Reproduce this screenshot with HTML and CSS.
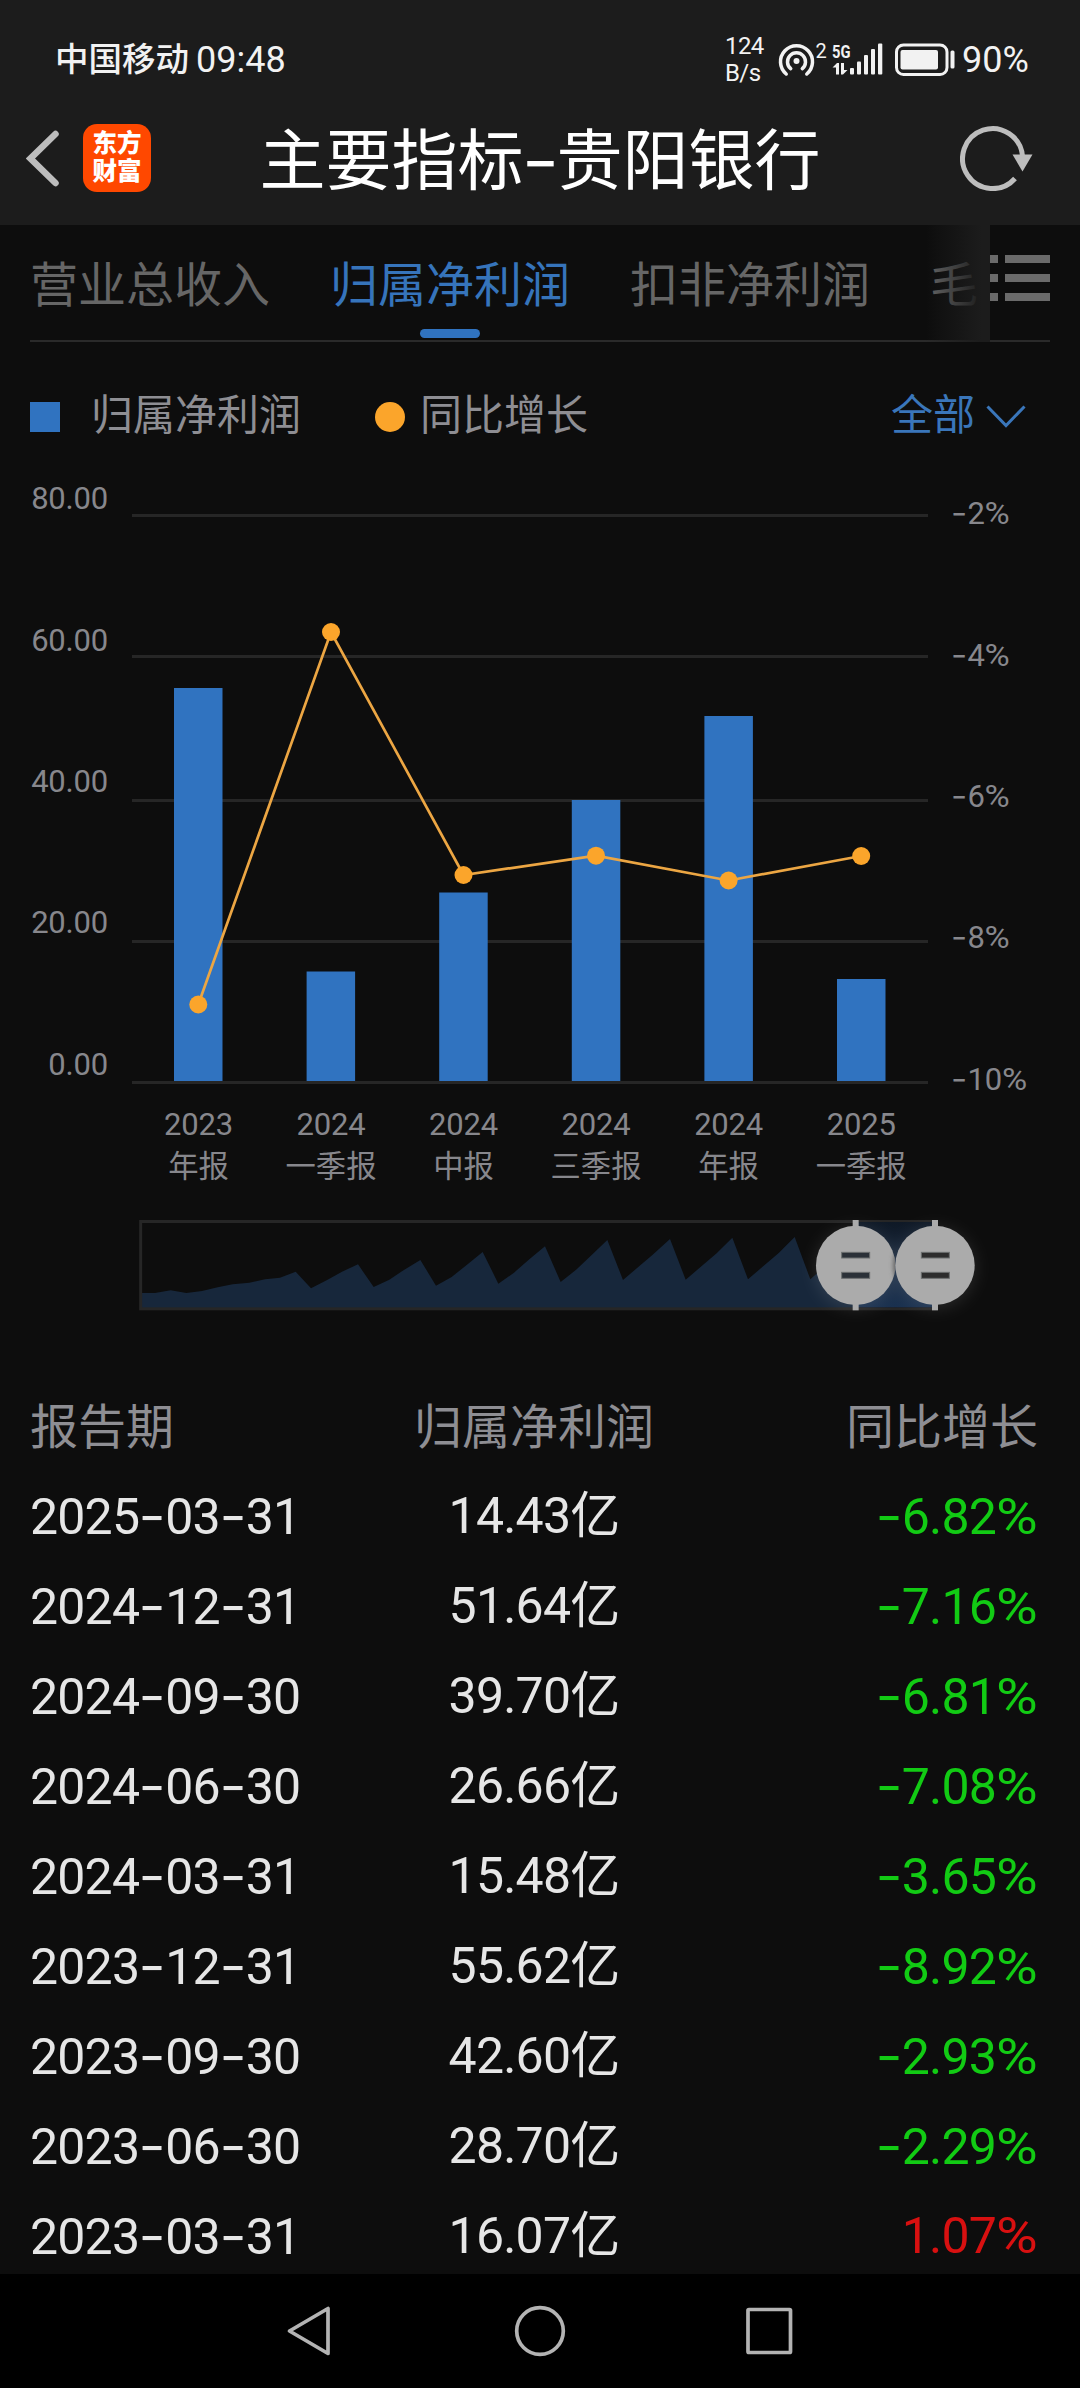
FILE: index.html
```html
<!DOCTYPE html>
<html lang="zh-CN">
<head>
<meta charset="utf-8">
<title>主要指标-贵阳银行</title>
<link rel="stylesheet" href="styles.css">
</head>
<body>
<header class="top">
  <div class="status">
    <div class="carrier"><span class="carrier-name">中国移动</span><span class="clock">09:48</span></div>
    <div class="status-right">
      <div class="speed"><span>124</span><span>B/s</span></div>
      <svg class="signal" width="78" height="40" viewBox="777 40 78 40">
        <g fill="none" stroke="#f2f2f2" stroke-width="3.5" stroke-linecap="round">
          <path d="M786.2 74A16 16 0 1 1 806.8 74"/>
          <path d="M790.7 68.7A9 9 0 1 1 802.3 68.7"/>
        </g>
        <circle cx="796.5" cy="61" r="3" fill="#f2f2f2"/>
        <text x="815.5" y="58" font-size="20" fill="#f2f2f2">2</text>
        <text x="832" y="57.5" font-size="19" font-weight="700" fill="#f2f2f2" textLength="18.5" lengthAdjust="spacingAndGlyphs">5G</text>
        <path d="M832.5 67.5L837 63h2v11.500h-3v-7zM841 63h3v7h3.500L843 74.500h-2z" fill="#f2f2f2"/>
      </svg>
      <svg class="bars" width="33" height="40" viewBox="850 40 33 40" fill="#f2f2f2">
        <rect x="850" y="68" width="4" height="6.500" rx="1"/><rect x="857" y="61.500" width="4" height="13" rx="1"/><rect x="864" y="55" width="4" height="19.500" rx="1"/><rect x="871" y="49" width="4" height="25.500" rx="1"/><rect x="878" y="43.500" width="4.300" height="31" rx="1"/>
      </svg>
      <svg class="battery" width="61" height="40" viewBox="894 40 61 40">
        <rect x="896.500" y="45" width="50.500" height="29.500" rx="7" fill="none" stroke="#f2f2f2" stroke-width="3"/>
        <rect x="900.500" y="50" width="37.500" height="19.500" rx="2" fill="#f2f2f2"/>
        <rect x="950.500" y="50.500" width="4" height="18" rx="1.500" fill="#f2f2f2"/>
      </svg>
      <span class="level">90%</span>
    </div>
  </div>
  <div class="titlebar">
    <div class="left">
      <svg width="34" height="58" viewBox="26 128 34 58"><path d="M55.500 133L30.500 157.500L55.500 182" fill="none" stroke="#bdbdbd" stroke-width="6.500" stroke-linecap="round" stroke-linejoin="miter"/></svg>
      <div class="logo"><span>东方</span><span>财富</span></div>
    </div>
    <h1>主要指标<i>-</i>贵阳银行</h1>
    <svg class="refresh" width="74" height="66" viewBox="960 124.500 74 66"><path d="M1015 178A30 30 0 1 1 1022.500 156" fill="none" stroke="#bdbdbd" stroke-width="5"/><path d="M1012.500 154h20l-10 17z" fill="#bdbdbd"/></svg>
  </div>
</header>

<nav class="tabs">
  <div class="tab-list">
    <span>营业总收入</span><span class="active">归属净利润</span><span>扣非净利润</span><span class="partial">毛</span>
  </div>
  <svg class="menu" width="60" height="46" viewBox="0 0 60 46" fill="#6a6a6a"><path d="M0 0h8v8H0zM15 0h45v8H15zM0 19h8v8H0zM15 19h45v8H15zM0 38h8v8H0zM15 38h45v8H15z"/></svg>
</nav>

<section class="legend">
  <i class="square"></i><span class="l1">归属净利润</span>
  <i class="dot"></i><span>同比增长</span>
  <div class="range"><span>全部</span><svg width="40" height="24" viewBox="0 0 40 24"><path d="M1.500 1.500L20 20.500L38.500 1.500" fill="none" stroke="#3a76ba" stroke-width="3"/></svg></div>
</section>

<svg class="chart" width="1080" height="710" viewBox="0 480 1080 710">
  <g fill="#262626">
    <rect x="132" y="514" width="796" height="3"/><rect x="132" y="655" width="796" height="3"/><rect x="132" y="799" width="796" height="3"/><rect x="132" y="940" width="796" height="3"/><rect x="132" y="1081" width="796" height="3"/>
  </g>
  <g fill="#3073c0">
    <rect x="174" y="688" width="48.500" height="393"/><rect x="306.600" y="971.500" width="48.500" height="109.500"/><rect x="439.200" y="892.500" width="48.500" height="188.500"/><rect x="571.800" y="800" width="48.500" height="281"/><rect x="704.400" y="716" width="48.500" height="365"/><rect x="837" y="979" width="48.500" height="102"/>
  </g>
  <polyline points="198.300,1004.500 331,632 463.500,875 596,855.700 728.600,880.500 861.200,856" fill="none" stroke="#eca643" stroke-width="2.700"/>
  <g fill="#fba52b">
    <circle cx="198.300" cy="1004.500" r="9"/><circle cx="331" cy="632" r="9"/><circle cx="463.500" cy="875" r="9"/><circle cx="596" cy="855.700" r="9"/><circle cx="728.600" cy="880.500" r="9"/><circle cx="861.200" cy="856" r="9"/>
  </g>
  <g class="axis" text-anchor="end">
    <text x="108" y="509">80.00</text><text x="108" y="650.500">60.00</text><text x="108" y="792">40.00</text><text x="108" y="933">20.00</text><text x="108" y="1075">0.00</text>
  </g>
  <g class="axis">
    <text class="minus" x="951" y="524" textLength="16" lengthAdjust="spacingAndGlyphs">-</text><text x="967.500" y="524">2</text><text x="984.500" y="524" textLength="25" lengthAdjust="spacingAndGlyphs">%</text>
    <text class="minus" x="951" y="665.500" textLength="16" lengthAdjust="spacingAndGlyphs">-</text><text x="967.500" y="665.500">4</text><text x="984.500" y="665.500" textLength="25" lengthAdjust="spacingAndGlyphs">%</text>
    <text class="minus" x="951" y="807" textLength="16" lengthAdjust="spacingAndGlyphs">-</text><text x="967.500" y="807">6</text><text x="984.500" y="807" textLength="25" lengthAdjust="spacingAndGlyphs">%</text>
    <text class="minus" x="951" y="948" textLength="16" lengthAdjust="spacingAndGlyphs">-</text><text x="967.500" y="948">8</text><text x="984.500" y="948" textLength="25" lengthAdjust="spacingAndGlyphs">%</text>
    <text class="minus" x="951" y="1089.500" textLength="16" lengthAdjust="spacingAndGlyphs">-</text><text x="967.500" y="1089.500">10</text><text x="1002" y="1089.500" textLength="25" lengthAdjust="spacingAndGlyphs">%</text>
  </g>
  <g class="axis" text-anchor="middle">
    <text x="198.500" y="1134.500">2023</text><text x="331" y="1134.500">2024</text><text x="463.500" y="1134.500">2024</text><text x="596" y="1134.500">2024</text><text x="728.600" y="1134.500">2024</text><text x="861.200" y="1134.500">2025</text>
  </g>
  <g class="period" text-anchor="middle">
    <text x="198.500" y="1176.500">年报</text><text x="331" y="1176.500">一季报</text><text x="463.500" y="1176.500">中报</text><text x="596" y="1176.500">三季报</text><text x="728.600" y="1176.500">年报</text><text x="861.200" y="1176.500">一季报</text>
  </g>
</svg>

<svg class="slider" width="960" height="140" viewBox="0 0 2880 420">
  <defs>
    <linearGradient id="sel" x1="0" y1="0" x2="0" y2="1"><stop offset="0" stop-color="#0f1926"/><stop offset="1" stop-color="#19304f"/></linearGradient>
    <filter id="glow" x="-50%" y="-50%" width="200%" height="200%"><feGaussianBlur stdDeviation="26"/></filter>
    <filter id="soft" x="-50%" y="-50%" width="200%" height="200%"><feGaussianBlur stdDeviation="8"/></filter>
    <clipPath id="knob"><circle cx="2207" cy="226" r="119"/></clipPath>
  </defs>
  <path fill="#17273b" d="M64 309H105L152 301L199 309L246 303L293 292L338 283L388 278L435 268L480 263L527 245L573 295L620 271L666 245L714 223L761 291L808 269L853 239L901 210L948 287L995 261L1041 224L1088 186L1135 281L1182 248L1228 208L1275 169L1322 276L1370 238L1415 195L1462 150L1509 270L1598 194L1650 147L1697 269L1790 190L1837 143L1884 268L1977 188L2024 141L2071 268L2160 188L2207 145V357H64Z"/>
  <rect x="62" y="94.500" width="2383" height="262" fill="none" stroke="#262626" stroke-width="9"/>
  <rect x="2207" y="96" width="238" height="256" fill="url(#sel)"/>
  <g fill="#fff" opacity=".12" filter="url(#glow)"><circle cx="2207" cy="234" r="119"/><circle cx="2445" cy="234" r="119"/></g>
  <g fill="#ababab">
    <rect x="2198" y="90" width="18" height="271"/><rect x="2436" y="90" width="18" height="271"/>
    <circle cx="2207" cy="226" r="119"/>
    <g clip-path="url(#knob)"><circle cx="2445" cy="226" r="124" fill="#555" filter="url(#soft)"/></g>
    <circle cx="2445" cy="226" r="119"/>
  </g>
  <g fill="#2b3138" stroke="#6c7070" stroke-width="3">
    <rect x="2165" y="187" width="84" height="17"/><rect x="2165" y="247" width="84" height="18"/>
    <rect x="2404" y="187" width="84" height="17" fill="#2d2d2d"/><rect x="2404" y="247" width="84" height="18" fill="#2d2d2d"/>
  </g>
</svg>

<section class="table">
  <div class="row head"><span>报告期</span><span>归属净利润</span><span>同比增长</span></div>
  <div class="row"><span>2025<i>-</i>03<i>-</i>31</span><span>14.43亿</span><span class="down"><i>-</i>6.82<b>%</b></span></div>
  <div class="row"><span>2024<i>-</i>12<i>-</i>31</span><span>51.64亿</span><span class="down"><i>-</i>7.16<b>%</b></span></div>
  <div class="row"><span>2024<i>-</i>09<i>-</i>30</span><span>39.70亿</span><span class="down"><i>-</i>6.81<b>%</b></span></div>
  <div class="row"><span>2024<i>-</i>06<i>-</i>30</span><span>26.66亿</span><span class="down"><i>-</i>7.08<b>%</b></span></div>
  <div class="row"><span>2024<i>-</i>03<i>-</i>31</span><span>15.48亿</span><span class="down"><i>-</i>3.65<b>%</b></span></div>
  <div class="row"><span>2023<i>-</i>12<i>-</i>31</span><span>55.62亿</span><span class="down"><i>-</i>8.92<b>%</b></span></div>
  <div class="row"><span>2023<i>-</i>09<i>-</i>30</span><span>42.60亿</span><span class="down"><i>-</i>2.93<b>%</b></span></div>
  <div class="row"><span>2023<i>-</i>06<i>-</i>30</span><span>28.70亿</span><span class="down"><i>-</i>2.29<b>%</b></span></div>
  <div class="row last"><span>2023<i>-</i>03<i>-</i>31</span><span>16.07亿</span><span class="up">1.07<b>%</b></span></div>
</section>

<footer class="sysnav">
  <svg width="1080" height="114" viewBox="0 2274 1080 114" fill="none" stroke="#b3b3b3" stroke-width="3.700" stroke-linejoin="round">
    <path d="M328 2308.500V2353.500L289.500 2331Z"/>
    <circle cx="540" cy="2331" r="23.300"/>
    <rect x="748" y="2309.500" width="42.500" height="43" rx="1"/>
  </svg>
</footer>
</body>
</html>
```
FILE: styles.css
```css
* { box-sizing: border-box; }
body {
  margin: 0;
  width: 1080px;
  height: 2388px;
  display: flex;
  flex-direction: column;
  overflow: hidden;
  background: #0d0d0d;
  color: #e6e6e6;
  font-family: Roboto, "Noto Sans CJK SC", sans-serif;
}
i { font-style: normal; }
svg { display: block; flex: none; }

.top { height: 225px; flex: none; background: #1c1c1c; }
.status {
  height: 90px;
  padding: 30px 48px 0 55px;
  display: flex;
  justify-content: space-between;
  align-items: center;
  color: #f2f2f2;
}
.carrier { display: flex; align-items: center; gap: 7px; line-height: 60px; }
.carrier-name { font-size: 33.5px; font-weight: 500; }
.clock { font-size: 36px; }
.status-right { display: flex; align-items: center; }
.speed { width: 52px; display: flex; flex-direction: column; font-size: 24px; line-height: 27px; letter-spacing: -.6px; }
.signal { margin-right: -5px; }
.bars { margin-right: 11px; }
.battery { margin-right: 7px; }
.level { font-size: 36px; width: 70px; line-height: 60px; }

.titlebar {
  height: 135px;
  padding: 0 46px 0 26px;
  display: grid;
  grid-template-columns: 200px 1fr 180px;
  align-items: center;
}
.left { display: flex; align-items: center; gap: 23px; }
.logo {
  width: 68px;
  height: 68px;
  padding-top: 6px;
  border-radius: 14px;
  background: #ff4800;
  color: #fff;
  display: flex;
  flex-direction: column;
  align-items: center;
  font-size: 24.5px;
  font-weight: 900;
  line-height: 28.500px;
}
h1 {
  margin: 0;
  padding-top: 6px;
  text-align: center;
  white-space: nowrap;
  font-size: 66px;
  font-weight: 400;
  line-height: 80px;
  color: #fff;
}
h1 i { display: inline-block; width: 33px; font-family: Inter, sans-serif; transform: scaleX(1.25); }
.refresh { justify-self: end; }

.tabs {
  position: relative;
  flex: none;
  height: 117px;
  margin: 0 30px;
  border-bottom: 2px solid #2a2a2a;
  display: flex;
}
.tab-list {
  width: 960px;
  height: 117px;
  display: flex;
  gap: 60px;
  white-space: nowrap;
  font-size: 48px;
  line-height: 122px;
  color: #666;
}
.tab-list span { position: relative; width: 240px; flex: none; }
.tab-list .partial { width: 48px; }
.tab-list .active { color: #3674bb; }
.active::after {
  content: "";
  position: absolute;
  left: 90px;
  top: 104px;
  width: 60px;
  height: 9px;
  border-radius: 5px;
  background: #3073c0;
}
.tab-list::after {
  content: "";
  position: absolute;
  left: 890px;
  top: 0;
  width: 70px;
  height: 117px;
  background: linear-gradient(90deg, rgba(28, 28, 28, 0) 8%, #1c1c1c 88%);
}
.menu { margin-top: 30px; }

.legend {
  height: 138px;
  flex: none;
  padding: 12px 54px 0 30px;
  display: flex;
  align-items: center;
  font-size: 42px;
  line-height: 60px;
  color: #8e8e93;
}
.legend span { margin-top: -3px; }
.square { width: 30px; height: 30px; margin-right: 31px; background: #3073c0; }
.l1 { width: 284px; }
.dot { width: 30px; height: 30px; margin-right: 15px; border-radius: 50%; background: #fba52b; }
.range { margin-left: auto; display: flex; align-items: center; gap: 11px; color: #3a76ba; }

.axis { font-size: 31px; letter-spacing: -.2px; fill: #87878c; }
.minus { font-family: Inter, sans-serif; }
.period { font-size: 30.3px; fill: #87878c; }
.slider { margin-left: 120px; }

.table { margin-top: 51px; flex: none; }
.row {
  height: 90px;
  padding: 0 42px 0 30px;
  display: grid;
  grid-template-columns: 1fr 1fr 1fr;
  font-size: 50px;
  line-height: 90px;
  letter-spacing: -.8px;
  white-space: nowrap;
}
.row span:nth-child(2) { text-align: center; }
.row span:nth-child(3) { text-align: right; }
.row i {
  display: inline-block;
  width: 26px;
  letter-spacing: 0;
  text-align: center;
  font-family: Inter, sans-serif;
  transform: scaleX(1.18);
}
.row b {
  display: inline-block;
  width: 42px;
  letter-spacing: 0;
  font-weight: 400;
  text-align: center;
  transform: scaleX(1.14);
}
.head { padding-top: 4px; font-size: 48px; line-height: 86px; letter-spacing: 0; color: #8e8e93; }
.row.last { height: 83px; }
.down { color: #12cb14; }
.up { color: #d81010; }

.sysnav { flex: 1; background: #000; }
```
